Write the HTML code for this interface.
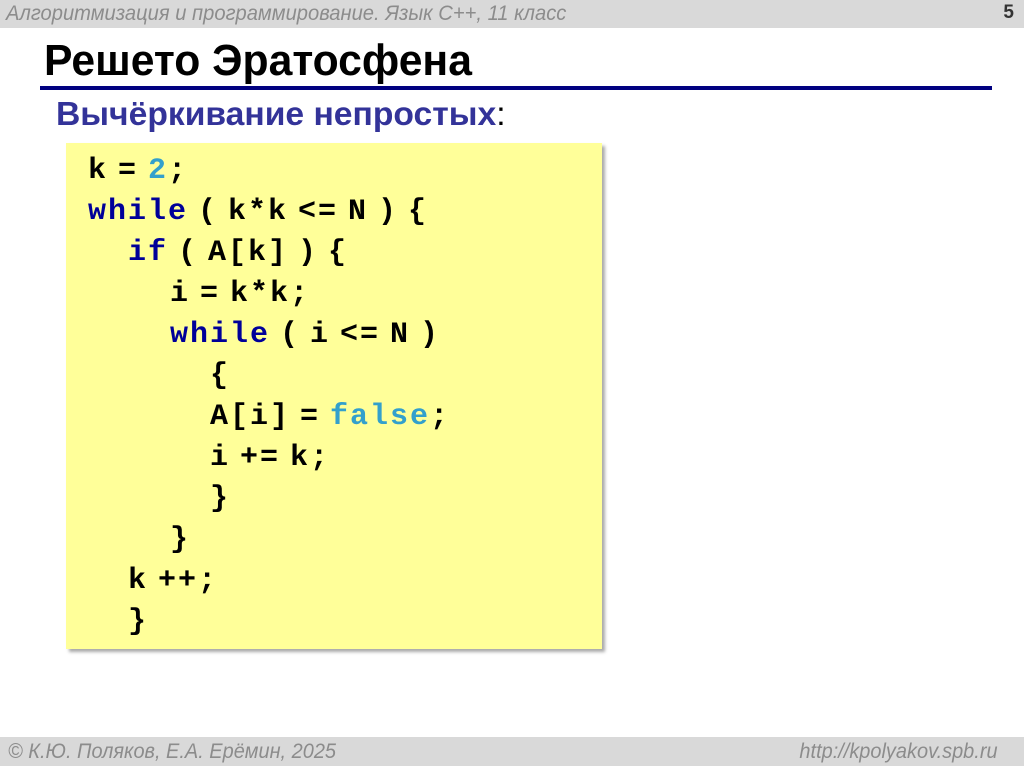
<!DOCTYPE html>
<html><head><meta charset="utf-8"><style>
body{margin:0;width:1024px;height:767px;background:#fff;position:relative;overflow:hidden;font-family:"Liberation Sans",sans-serif}
.hdr{position:absolute;left:0;top:0;width:1024px;height:28px;background:#d9d9d9}
.hdr .t{position:absolute;left:6px;top:2px;font-size:21px;font-style:italic;color:#8c8c8c;transform:scaleX(.96);transform-origin:left;white-space:nowrap}
.hdr .n{position:absolute;right:10px;top:2px;font-size:19px;font-weight:bold;color:#333}
h1{position:absolute;left:44px;top:36px;margin:0;font-size:44px;font-weight:bold;color:#000;transform:scaleX(.97);transform-origin:left;white-space:nowrap}
.line{position:absolute;left:40px;top:86px;width:952px;height:4px;background:#000080}
.sub{position:absolute;left:56px;top:95px;font-size:33px;font-weight:bold;color:#333399;transform:scaleX(1.02);transform-origin:left;white-space:nowrap}
.sub span{font-weight:normal;color:#000}
.box{position:absolute;left:66px;top:143px;width:536px;height:506px;background:#ffff99;box-shadow:3px 3px 3px #aaa}
.code{position:absolute;left:88px;top:151px;font-family:"Liberation Mono",monospace;font-weight:bold;font-size:30px;letter-spacing:2px;word-spacing:-10px;color:#000}
.code div{height:41px;line-height:41px;white-space:pre}
.kw{color:#000099}.num{color:#33a0cc}
.ftr{position:absolute;left:0;top:737px;width:1024px;height:29px;background:#d9d9d9;color:#8c8c8c;font-style:italic;font-size:21px}
.ftr .l{position:absolute;left:8px;top:3px;transform:scaleX(.95);transform-origin:left;white-space:nowrap}
.ftr .r{position:absolute;right:26px;top:3px;transform:scaleX(.95);transform-origin:right;white-space:nowrap}
</style></head><body>
<div class="hdr"><div class="t">Алгоритмизация и программирование. Язык С++, 11 класс</div><div class="n">5</div></div>
<h1>Решето Эратосфена</h1>
<div class="line"></div>
<div class="sub">Вычёркивание непростых<span>:</span></div>
<div class="box"></div>
<div class="code"><div>k = <span class="num">2</span>;</div><div><span class="kw">while</span> ( k*k &lt;= N ) {</div><div style="padding-left:40px"><span class="kw">if</span> ( A[k] ) {</div><div style="padding-left:82px">i = k*k;</div><div style="padding-left:82px"><span class="kw">while</span> ( i &lt;= N )</div><div style="padding-left:122px">{</div><div style="padding-left:122px">A[i] = <span class="num">false</span>;</div><div style="padding-left:122px">i += k;</div><div style="padding-left:122px">}</div><div style="padding-left:82px">}</div><div style="padding-left:40px">k ++;</div><div style="padding-left:40px">}</div></div>
<div class="ftr"><div class="l">© К.Ю. Поляков, Е.А. Ерёмин, 2025</div><div class="r">http://kpolyakov.spb.ru</div></div>
</body></html>
